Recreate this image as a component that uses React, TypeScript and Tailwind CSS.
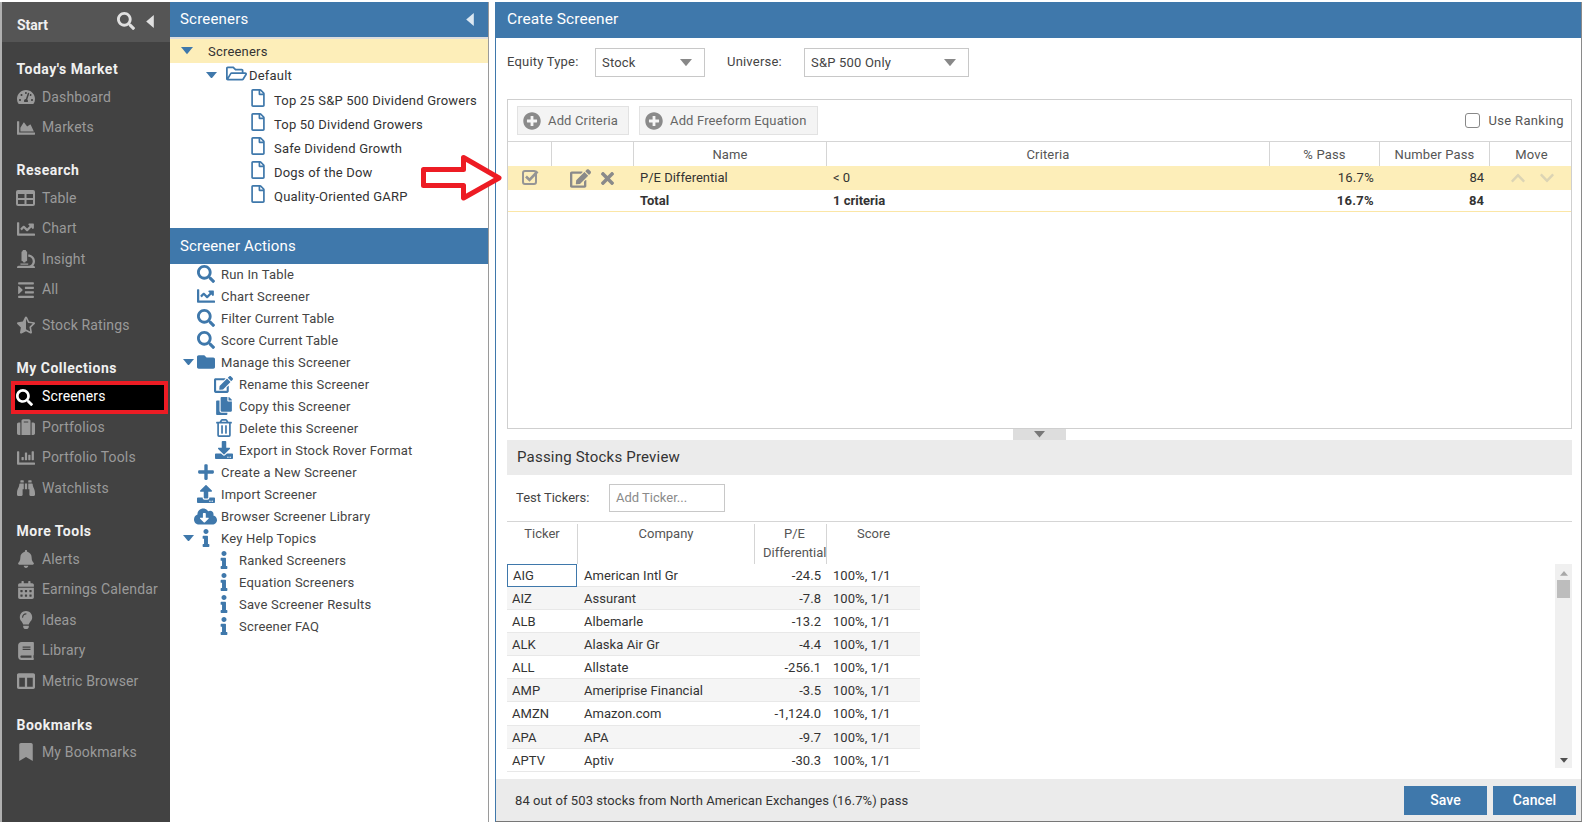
import React from "react";
import { FaSearch, FaTachometerAlt, FaChartArea, FaChartLine, FaMicroscope, FaIndent, FaStarHalfAlt, FaSuitcase, FaChartBar, FaBinoculars, FaBell, FaCalendarAlt, FaLightbulb, FaBook, FaColumns, FaBookmark, FaRegFolderOpen, FaRegFile, FaFolder, FaEdit, FaCopy, FaRegTrashAlt, FaDownload, FaPlus, FaUpload, FaCloudDownloadAlt, FaInfo, FaTimes, FaPlusCircle, FaChevronUp, FaChevronDown } from "react-icons/fa";

const font = { fontFamily: "Roboto, 'Liberation Sans', sans-serif" };

function Tri({ dir = "down", c = "#3f78ab", w = 10 }: { dir?: string; c?: string; w?: number }) {
  const pts = dir === "down" ? "0,0 10,0 5,6" : dir === "up" ? "0,6 10,6 5,0" : "7,0 7,12 0,6";
  return <svg width={dir === "left" ? 8 : w} height={dir === "left" ? 13 : (w * 6) / 10} viewBox={dir === "left" ? "0 0 7 12" : "0 0 10 6"} className="shrink-0"><polygon points={pts} fill={c} /></svg>;
}

function TableIcon() {
  return (
    <svg width="19" height="16" viewBox="0 0 19 16" className="shrink-0">
      <rect width="19" height="16" rx="2" fill="currentColor" />
      <rect x="2" y="4" width="6.5" height="4" fill="#424242" />
      <rect x="10.5" y="4" width="6.5" height="4" fill="#424242" />
      <rect x="2" y="10" width="6.5" height="4" fill="#424242" />
      <rect x="10.5" y="10" width="6.5" height="4" fill="#424242" />
    </svg>
  );
}
function CheckIcon() {
  return (
    <svg width="18" height="16" viewBox="0 0 18 16" className="shrink-0">
      <rect x="1" y="2" width="13" height="13" rx="2" fill="none" stroke="#959595" strokeWidth="2" />
      <path d="M4 7.5 L7.5 11 L15.5 2.5" fill="none" stroke="#959595" strokeWidth="2.6" />
    </svg>
  );
}

function SideTitle({ children, className = "" }: { children: React.ReactNode; className?: string }) {
  return <div className={`h-6 pl-[14.5px] flex items-center text-[14px] font-bold tracking-[0.5px] text-[#f0f0f0] whitespace-nowrap ${className}`}>{children}</div>;
}
function SideItem({ icon, label, className = "" }: { icon: React.ReactNode; label: string; className?: string }) {
  return (
    <div className={`h-[30.5px] flex items-center text-[14px] tracking-[0.15px] text-[#9a9a9a] ${className}`}>
      <span className="w-[40px] pl-[14px] pr-[7px] flex justify-center shrink-0">{icon}</span>
      <span className="whitespace-nowrap">{label}</span>
    </div>
  );
}

function Sidebar() {
  const s = 18;
  return (
    <div className="w-[170px] shrink-0 h-full bg-[#424242] border-l-2 border-[#b0b0b0] flex flex-col">
      <div className="h-10 shrink-0 bg-[#555555] flex items-center pl-[15px] text-[14px] font-bold text-[#f0f0f0]">
        <span className="mt-[6px]">Start</span>
        <FaSearch size={18} className="ml-[69px] -mt-[2px] text-[#e0e0e0]" />
        <span className="ml-[11px] -mt-[2px]"><Tri dir="left" c="#e0e0e0" /></span>
      </div>
      <SideTitle className="mt-[15px]">Today's Market</SideTitle>
      <div className="mt-px" />
      <SideItem icon={<FaTachometerAlt size={s} />} label="Dashboard" />
      <SideItem icon={<FaChartArea size={s} />} label="Markets" />
      <SideTitle className="mt-[15px]">Research</SideTitle>
      <div className="mt-px" />
      <SideItem icon={<TableIcon />} label="Table" />
      <SideItem icon={<FaChartLine size={s} />} label="Chart" />
      <SideItem icon={<FaMicroscope size={s} />} label="Insight" />
      <SideItem icon={<FaIndent size={s} />} label="All" />
      <SideItem className="mt-[5px]" icon={<FaStarHalfAlt size={s} />} label="Stock Ratings" />
      <SideTitle className="mt-[15.5px]">My Collections</SideTitle>
      <div className="mt-px ml-[9px] w-[157px] h-[33px] border-4 border-[#ed1c24] bg-black flex items-center text-white text-[14px] tracking-[0.15px] relative z-10">
        <FaSearch size={17} className="ml-[1px] text-white" />
        <span className="ml-[9px] -mt-[3px]">Screeners</span>
      </div>
      <SideItem className="-mt-[2px]" icon={<FaSuitcase size={s} />} label="Portfolios" />
      <SideItem icon={<FaChartBar size={s} />} label="Portfolio Tools" />
      <SideItem icon={<FaBinoculars size={s} />} label="Watchlists" />
      <SideTitle className="mt-[15.5px]">More Tools</SideTitle>
      <div className="mt-px" />
      <SideItem icon={<FaBell size={s} />} label="Alerts" />
      <SideItem icon={<FaCalendarAlt size={s} />} label="Earnings Calendar" />
      <SideItem icon={<FaLightbulb size={s} />} label="Ideas" />
      <SideItem icon={<FaBook size={s} />} label="Library" />
      <SideItem icon={<FaColumns size={s} />} label="Metric Browser" />
      <SideTitle className="mt-[16.5px]">Bookmarks</SideTitle>
      <SideItem icon={<FaBookmark size={s} />} label="My Bookmarks" />
    </div>
  );
}

function TreeFile({ label }: { label: string }) {
  return (
    <div className="h-6 flex items-center pl-[79px] text-[13px] tracking-[0.2px] text-[#333]">
      <FaRegFile size={18} className="text-[#3f78ab] -mt-[3px] shrink-0" />
      <span className="ml-[7px] mt-[3px] whitespace-nowrap">{label}</span>
    </div>
  );
}
function Action({ icon, label, indent = 0, caret = false }: { icon: React.ReactNode; label: string; indent?: number; caret?: boolean }) {
  return (
    <div className="h-[22px] flex items-center text-[13px] tracking-[0.2px] text-[#444]">
      <span className="w-[26px] shrink-0 flex justify-end pr-[2px]">{caret && <Tri w={11} />}</span>
      {indent > 0 && <span className="w-[18px] shrink-0" />}
      <span className="w-[19px] h-[19px] shrink-0 flex items-center justify-center text-[#3f78ab]">{icon}</span>
      <span className="ml-[6px] mt-[1px] whitespace-nowrap">{label}</span>
    </div>
  );
}

function Middle() {
  const s = 18;
  return (
    <div className="w-[319px] shrink-0 h-full bg-white border-r border-[#9a9a9a] flex flex-col">
      <div className="h-[35px] shrink-0 bg-[#3f78ab] flex items-center justify-between pl-[10px] pr-[14px] text-[15px] tracking-[0.2px] text-white">
        <span>Screeners</span>
        <Tri dir="left" c="#dce8f2" />
      </div>
      <div className="h-[2px] shrink-0 bg-[#dddddd]" />
      <div className="h-6 shrink-0 bg-[#fdeeb9] flex items-center text-[13px] tracking-[0.2px] text-[#333]">
        <span className="ml-[11px]"><Tri w={12} /></span>
        <span className="ml-[15px] mt-[1px]">Screeners</span>
      </div>
      <div className="h-6 shrink-0 flex items-center text-[13px] tracking-[0.2px] text-[#333] pl-[36px]">
        <Tri w={11} />
        <FaRegFolderOpen size={21} className="ml-[9px] -mt-[4px] text-[#3f78ab]" />
        <span className="ml-[2px] mt-[2px]">Default</span>
      </div>
      <TreeFile label="Top 25 S&P 500 Dividend Growers" />
      <TreeFile label="Top 50 Dividend Growers" />
      <TreeFile label="Safe Dividend Growth" />
      <TreeFile label="Dogs of the Dow" />
      <TreeFile label="Quality-Oriented GARP" />
      <div className="h-[21px] shrink-0" />
      <div className="h-9 shrink-0 bg-[#3f78ab] flex items-center pl-[10px] text-[15px] tracking-[0.15px] text-white">Screener Actions</div>
      <div className="-mt-px flex flex-col">
        <Action icon={<FaSearch size={s} />} label="Run In Table" />
        <Action icon={<FaChartLine size={s} />} label="Chart Screener" />
        <Action icon={<FaSearch size={s} />} label="Filter Current Table" />
        <Action icon={<FaSearch size={s} />} label="Score Current Table" />
        <Action caret icon={<FaFolder size={s} />} label="Manage this Screener" />
        <Action indent={1} icon={<FaEdit size={21} />} label="Rename this Screener" />
        <Action indent={1} icon={<FaCopy size={s} />} label="Copy this Screener" />
        <Action indent={1} icon={<FaRegTrashAlt size={s} />} label="Delete this Screener" />
        <Action indent={1} icon={<FaDownload size={s} />} label="Export in Stock Rover Format" />
        <Action icon={<FaPlus size={s} />} label="Create a New Screener" />
        <Action icon={<FaUpload size={s} />} label="Import Screener" />
        <Action icon={<FaCloudDownloadAlt className="shrink-0" size={23} />} label="Browser Screener Library" />
        <Action caret icon={<FaInfo size={s} />} label="Key Help Topics" />
        <Action indent={1} icon={<FaInfo size={s} />} label="Ranked Screeners" />
        <Action indent={1} icon={<FaInfo size={s} />} label="Equation Screeners" />
        <Action indent={1} icon={<FaInfo size={s} />} label="Save Screener Results" />
        <Action indent={1} icon={<FaInfo size={s} />} label="Screener FAQ" />
      </div>
    </div>
  );
}

function Select({ value, w }: { value: string; w: string }) {
  return (
    <div className={`${w} h-[29px] shrink-0 border border-[#c8c8c8] bg-white flex items-center justify-between pl-[6px] pr-[12px] text-[13px] tracking-[0.2px] text-[#444]`}>
      <span className="mt-[1px]">{value}</span>
      <Tri c="#888" w={12} />
    </div>
  );
}
function AddBtn({ label, w, className = "" }: { label: string; w: string; className?: string }) {
  return (
    <div className={`${w} h-[29px] border border-[#e2e2e2] bg-[#f4f4f4] flex items-center pl-[5px] text-[13px] tracking-[0.15px] text-[#666] ${className}`}>
      <FaPlusCircle size={18} className="text-[#8a8a8a] shrink-0" />
      <span className="ml-[7px] whitespace-nowrap">{label}</span>
    </div>
  );
}

const stocks: [string, string, string][] = [
  ["AIG", "American Intl Gr", "-24.5"],
  ["AIZ", "Assurant", "-7.8"],
  ["ALB", "Albemarle", "-13.2"],
  ["ALK", "Alaska Air Gr", "-4.4"],
  ["ALL", "Allstate", "-256.1"],
  ["AMP", "Ameriprise Financial", "-3.5"],
  ["AMZN", "Amazon.com", "-1,124.0"],
  ["APA", "APA", "-9.7"],
  ["APTV", "Aptiv", "-30.3"],
];

function Right() {
  return (
    <div className="w-[1087px] shrink-0 h-full border-l border-r border-l-[#3f78ab] border-r-[#8a8a8a] border-b border-b-[#777] flex flex-col bg-white">
      <div className="h-9 shrink-0 bg-[#3f78ab] flex items-center pl-[11px] text-[15.5px] tracking-[0.1px] text-white"><span>Create Screener</span></div>
      <div className="mt-[10px] h-[29px] shrink-0 flex items-center text-[13px] tracking-[0.2px] text-[#444]">
        <span className="ml-[11px] w-[88px] -mt-[1px]">Equity Type:</span>
        <Select value="Stock" w="w-[110px]" />
        <span className="ml-[22px] w-[77px] -mt-[1px]">Universe:</span>
        <Select value="S&P 500 Only" w="w-[165px]" />
      </div>
      <div className="relative ml-[11px] mr-[9px] mt-[22px] h-[330px] shrink-0 border border-[#cfcfcf] flex flex-col">
        <div className="h-[42px] shrink-0 flex items-center pl-[9px] border-b border-[#d5d5d5]">
          <AddBtn label="Add Criteria" w="w-[112px]" />
          <AddBtn label="Add Freeform Equation" w="w-[179px]" className="ml-[10px]" />
          <div className="ml-auto mr-[7px] flex items-center text-[13px] tracking-[0.35px] text-[#555]">
            <span className="w-[15px] h-[15px] rounded-[3px] border-[1.5px] border-[#888]" />
            <span className="ml-[8px]">Use Ranking</span>
          </div>
        </div>
        <div className="h-[24px] shrink-0 flex text-[13px] tracking-[0.15px] text-[#555] text-center">
          <div className="w-[44px] border-r border-[#d5d5d5]" />
          <div className="w-[82px] border-r border-[#d5d5d5]" />
          <div className="w-[193px] border-r border-[#d5d5d5] leading-[26px]">Name</div>
          <div className="w-[443px] border-r border-[#d5d5d5] leading-[26px]">Criteria</div>
          <div className="w-[110px] border-r border-[#d5d5d5] leading-[26px]">% Pass</div>
          <div className="w-[110px] border-r border-[#d5d5d5] leading-[26px]">Number Pass</div>
          <div className="w-[80px] leading-[26px] pl-[3px]">Move</div>
        </div>
        <div className="h-[24px] shrink-0 flex items-center bg-[#fdeeb9] text-[13px] text-[#333]">
          <div className="w-[44px] pl-[14px]"><span className="block -mt-[3px]"><CheckIcon /></span></div>
          <div className="w-[81px] flex items-center pl-[18px]">
            <FaEdit size={21} className="text-[#8a8a8a] shrink-0" />
            <FaTimes size={19} className="text-[#8a8a8a] ml-[7px] shrink-0" />
          </div>
          <div className="w-[194px] pl-[7px]">P/E Differential</div>
          <div className="w-[442px] pl-[6px]">&lt; 0</div>
          <div className="w-[110px] text-right pr-[5px] tracking-[0.3px]">16.7%</div>
          <div className="w-[110px] text-right pr-[5px]">84</div>
          <div className="w-[81px] flex items-center pl-[21px] text-[#dcd4b4]">
            <FaChevronUp size={16} />
            <FaChevronDown size={16} className="ml-[13px]" />
          </div>
        </div>
        <div className="h-[22px] shrink-0 flex items-center border-b border-[#fbe6a6] text-[13px] font-bold text-[#333]">
          <div className="w-[125px]" />
          <div className="w-[194px] pl-[7px]">Total</div>
          <div className="w-[442px] pl-[6px]">1 criteria</div>
          <div className="w-[110px] text-right pr-[5px] tracking-[0.3px]">16.7%</div>
          <div className="w-[110px] text-right pr-[5px]">84</div>
        </div>
        <div className="absolute left-[505px] -bottom-[12px] w-[53px] h-[11px] bg-[#dddddd] flex items-center justify-center">
          <Tri c="#777" w={11} />
        </div>
      </div>
      <div className="mt-[11px] ml-[11px] mr-[9px] h-[35px] shrink-0 bg-[#ebebeb] flex items-center pl-[10px] text-[15px] tracking-[0.2px] text-[#333]">Passing Stocks Preview</div>
      <div className="mt-[9px] h-[28px] shrink-0 flex items-center text-[13px] text-[#444]">
        <span className="ml-[20px] w-[93px]">Test Tickers:</span>
        <div className="w-[116px] h-[28px] border border-[#c8c8c8] flex items-center pl-[6px] text-[#8a8a8a]">Add Ticker...</div>
      </div>
      <div className="mt-[9px] ml-[11px] mr-[9px] h-[43px] shrink-0 border-t border-[#d5d5d5] flex text-[13px] text-[#555] text-center leading-[19px] pt-[2px]">
        <div className="w-[71px] border-r border-[#d5d5d5]">Ticker</div>
        <div className="w-[177px] border-r border-[#d5d5d5]">Company</div>
        <div className="w-[72px] border-r border-[#d5d5d5] whitespace-nowrap pl-[8px]">P/E<br />Differential</div>
        <div className="w-[93px]">Score</div>
      </div>
      <div className="ml-[11px] mr-[9px] flex-1 min-h-0 flex justify-between">
        <div className="w-[413px]">
          {stocks.map((r, i) => (
            <div key={r[0]} className={`${i === 6 ? "h-[24px]" : "h-[23px]"} pt-[1px] flex items-center text-[13px] tracking-[0.05px] text-[#333] border-b border-[#e8e8e8] ${i % 2 ? "bg-[#f5f5f5]" : "bg-white"}`}>
              <div className={`w-[70px] flex items-center pl-[5px] ${i === 0 ? "border border-[#3f78ab] h-[23px] pl-[4px]" : ""}`}>{r[0]}</div>
              <div className="w-[178px] pl-[7px]">{r[1]}</div>
              <div className="w-[72px] text-right pr-[6px]">{r[2]}</div>
              <div className="w-[93px] pl-[6px]">100%, 1/1</div>
            </div>
          ))}
        </div>
        <div className="w-[17px] h-[204px] bg-[#f0f0f0] flex flex-col items-center relative">
          <div className="mt-[7px]"><Tri dir="up" c="#a8a8a8" w={8} /></div>
          <div className="mt-[4px] w-[13px] h-[18px] bg-[#bdbdbd]" />
          <div className="mt-auto mb-[5px]"><Tri c="#505050" w={8} /></div>
        </div>
      </div>
      <div className="h-[42px] shrink-0 bg-[#ebebeb] flex items-center pl-[19px] pr-[5px] text-[13px] tracking-[0.08px] text-[#333]">
        <span className="mt-[1px]">84 out of 503 stocks from North American Exchanges (16.7%) pass</span>
        <div className="ml-auto w-[83px] h-[29px] bg-[#3f78ab] text-white flex items-center justify-center text-[14px] font-medium">Save</div>
        <div className="ml-[6px] w-[83px] h-[29px] bg-[#3f78ab] text-white flex items-center justify-center text-[14px] font-medium">Cancel</div>
      </div>
    </div>
  );
}

export default function App() {
  return (
    <div style={font} className="relative w-[1584px] h-[822px] bg-white overflow-hidden pt-[2px] flex">
      <Sidebar />
      <Middle />
      <div className="w-[6px] shrink-0" />
      <Right />
      <svg className="absolute left-[419px] top-[153px]" width="88" height="52" viewBox="0 0 88 52">
        <polygon points="4.5,16.5 44.5,16.5 44.5,4.5 80,25 44.5,45 44.5,32.5 4.5,32.5" fill="#fff" stroke="#ed1c24" strokeWidth="5" strokeLinejoin="round" />
      </svg>
    </div>
  );
}
